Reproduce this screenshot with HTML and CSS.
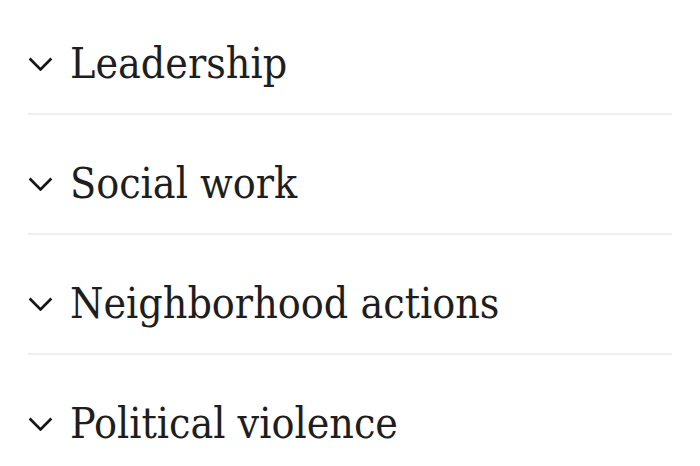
FILE: index.html
```html
<!DOCTYPE html>
<html lang="en">
<head>
<meta charset="utf-8">
<title>Topics</title>
<link rel="stylesheet" href="styles.css">
</head>
<body>
<ul class="topics">
  <li class="topic">
    <button class="topic-toggle" type="button">
      <svg class="chev" viewBox="0 0 24 14" aria-hidden="true"><path d="M1.5 1.5 L12 12 L22.5 1.5"/></svg>
      <span class="topic-title">Leadership</span>
    </button>
  </li>
  <li class="topic">
    <button class="topic-toggle" type="button">
      <svg class="chev" viewBox="0 0 24 14" aria-hidden="true"><path d="M1.5 1.5 L12 12 L22.5 1.5"/></svg>
      <span class="topic-title">Social work</span>
    </button>
  </li>
  <li class="topic">
    <button class="topic-toggle" type="button">
      <svg class="chev" viewBox="0 0 24 14" aria-hidden="true"><path d="M1.5 1.5 L12 12 L22.5 1.5"/></svg>
      <span class="topic-title">Neighborhood actions</span>
    </button>
  </li>
  <li class="topic">
    <button class="topic-toggle" type="button">
      <svg class="chev" viewBox="0 0 24 14" aria-hidden="true"><path d="M1.5 1.5 L12 12 L22.5 1.5"/></svg>
      <span class="topic-title">Political violence</span>
    </button>
  </li>
</ul>
</body>
</html>
```
FILE: styles.css
```css
html, body {
  margin: 0;
  padding: 0;
  background: #ffffff;
}

.topics {
  list-style: none;
  margin: -5px 0 0;
  padding: 0 28px;
}

.topic {
  border-bottom: 2px solid #efefef;
}

.topic-toggle {
  box-sizing: border-box;
  display: flex;
  align-items: center;
  gap: 17px;
  width: 100%;
  height: 118px;
  padding: 20px 0 0 0;
  border: 0;
  background: none;
  color: #1e1e1e;
  font-family: "DejaVu Serif Condensed", "DejaVu Serif", serif;
  font-size: 42.5px;
  text-align: left;
  cursor: pointer;
}

.chev {
  width: 25px;
  height: 14.5px;
  flex: none;
}

.chev path {
  fill: none;
  stroke: #161616;
  stroke-width: 2.6;
}

.topic-title {
  line-height: 50px;
}
```
